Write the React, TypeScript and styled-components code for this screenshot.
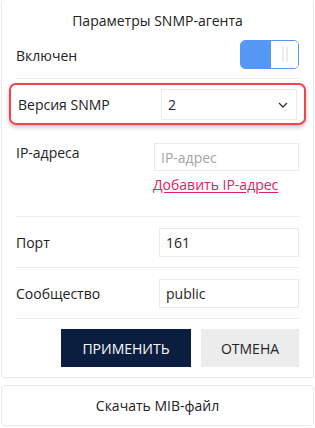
import React from 'react';
import styled, {createGlobalStyle} from 'styled-components';

const GlobalStyle = createGlobalStyle`
  html, body {
    margin: 0;
    background: #ffffff;
  }

  body {
    font-family: "Open Sans", "Noto Sans", sans-serif;
    font-size: 14px;
    color: #222222;
  }
`;

const Page = styled.div`
  display: flex;
  flex-direction: column;
  gap: 7px;
  padding: 0 1px;
`;

const Card = styled.div`
  background: #fff;
  border: 1px solid #e8e8e8;
  border-radius: 4px;
`;

const SettingsCard = styled(Card)`
  padding: 0 14px 10px;
  border-top-color: transparent;
`;

const Title = styled.div`
  height: 39px;
  display: flex;
  align-items: center;
  justify-content: center;
  font-size: 14px;
`;

const Row = styled.div<{ $top?: boolean; $pad?: string }>`
  display: flex;
  align-items: ${({$top}) => ($top ? 'flex-start' : 'center')};
  padding: ${({$pad}) => $pad || '11px 0 10px'};
  border-bottom: 1px solid #ececec;
`;

const HighlightRow = styled(Row)`
  margin: 4px -7px 0;
  padding: 4px 7px 3px;
  border: 2px solid #f2424e;
  border-radius: 7px;
  box-shadow: 0 2px 4px rgba(0, 0, 0, 0.25);
`;

const Label = styled.div<{ $offset?: number }>`
  width: 143px;
  flex-shrink: 0;
  line-height: 20px;
  margin-top: ${({$offset}) => ($offset ? `${$offset}px` : '0')};
`;

const Control = styled.div<{ $shift?: number }>`
  flex: 1;
  display: flex;
  flex-direction: column;
  align-items: flex-start;
  margin-left: ${({$shift}) => ($shift ? `-${$shift}px` : '0')};
`;

const TextBox = styled.div<{ $placeholder?: boolean; $height?: number }>`
  box-sizing: border-box;
  width: 100%;
  height: ${({$height}) => $height || 29}px;
  border: 1px solid #ebebeb;
  padding: 0 6px;
  display: flex;
  align-items: center;
  color: ${({$placeholder}) => ($placeholder ? '#a3a3a3' : '#222')};
`;

const SelectBox = styled(TextBox)`
  justify-content: space-between;
  padding-right: 8px;
`;

const Link = styled.a`
  margin-top: 4px;
  margin-left: -1px;
  color: #e3205c;
  text-decoration: underline;
  text-underline-offset: 2px;
  line-height: 20px;
`;

const Switch = styled.div`
  margin-left: auto;
  width: 59px;
  height: 29px;
  box-sizing: border-box;
  border: 1px solid #5598f3;
  border-radius: 5px;
  display: flex;
  overflow: hidden;
`;

const SwitchOn = styled.div`
  width: 30px;
  background: #5598f3;
`;

const SwitchKnob = styled.div`
  flex: 1;
  background: #fff;
  display: flex;
  align-items: center;
  justify-content: center;
  gap: 2px;

  &::before, &::after {
    content: '';
    width: 2px;
    height: 15px;
    background: #ececec;
  }
`;

const Actions = styled.div`
  display: flex;
  justify-content: flex-end;
  gap: 10px;
  padding-top: 10px;
`;

const Button = styled.button<{ $primary?: boolean }>`
  height: 38px;
  border: none;
  font-family: inherit;
  font-size: 14px;
  text-transform: uppercase;
  padding: 0;
  width: ${({$primary}) => ($primary ? '130px' : '98px')};
  background: ${({$primary}) => ($primary ? '#0b1e40' : '#ececec')};
  color: ${({$primary}) => ($primary ? '#fff' : '#222')};
`;

const DownloadCard = styled(Card)`
  height: 39px;
  display: flex;
  align-items: center;
  justify-content: center;
`;

const Chevron = () => (
    <svg width="10" height="6" viewBox="0 0 10 6" fill="none">
        <path d="M1 1l4 4 4-4" stroke="#333" strokeWidth="1.3"/>
    </svg>
);

export default function App() {
    return (
        <>
            <GlobalStyle/>
            <Page>
                <SettingsCard>
                    <Title>Параметры SNMP-агента</Title>
                    <Row $pad="0 0 9px">
                        <Label $offset={3}>Включен</Label>
                        <Switch>
                            <SwitchOn/>
                            <SwitchKnob/>
                        </Switch>
                    </Row>
                    <HighlightRow>
                        <Label>Версия SNMP</Label>
                        <Control>
                            <SelectBox $height={31}>
                                <span>2</span>
                                <Chevron/>
                            </SelectBox>
                        </Control>
                    </HighlightRow>
                    <Row $top $pad="18px 0 21px">
                        <Label>IP-адреса</Label>
                        <Control $shift={5}>
                            <TextBox $placeholder $height={28}>IP-адрес</TextBox>
                            <Link>Добавить IP-адрес</Link>
                        </Control>
                    </Row>
                    <Row>
                        <Label>Порт</Label>
                        <Control>
                            <TextBox>161</TextBox>
                        </Control>
                    </Row>
                    <Row>
                        <Label>Сообщество</Label>
                        <Control>
                            <TextBox>public</TextBox>
                        </Control>
                    </Row>
                    <Actions>
                        <Button $primary>Применить</Button>
                        <Button>Отмена</Button>
                    </Actions>
                </SettingsCard>
                <DownloadCard>Скачать MIB-файл</DownloadCard>
            </Page>
        </>
    );
}
